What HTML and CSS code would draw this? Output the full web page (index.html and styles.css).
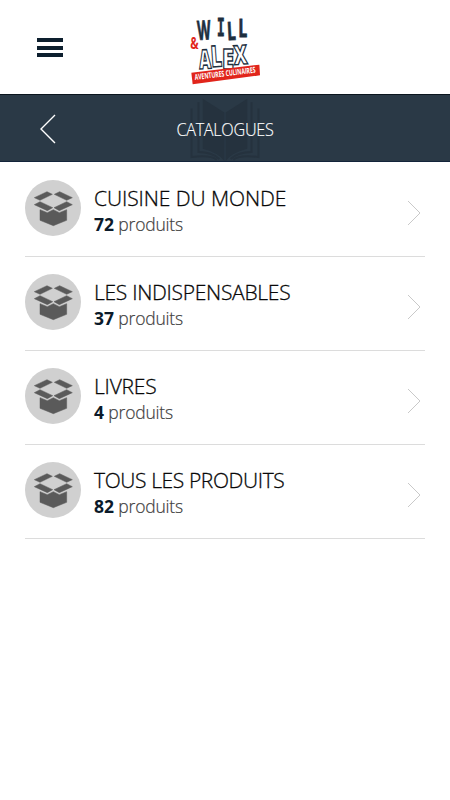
FILE: index.html
```
<!DOCTYPE html>
<html lang="fr">
<head>
<meta charset="utf-8">
<title>Catalogues</title>
<link rel="stylesheet" href="styles.css">
</head>
<body>
<svg class="defs" width="0" height="0">
<symbol id="box" viewBox="0 0 168 168">
<circle cx="84" cy="84" r="84" fill="#d0d0d0"/>
<path fill="#5a5a5a" stroke="#5a5a5a" stroke-width="1.5" d="M28 53L66 35L82 43L45 61ZM142 53L104 35L88 43L125 61ZM28 74L45 65L83 83L67 92ZM142 74L125 65L87 83L103 92ZM45 89L67 98L85 89L103 98L125 89V121L85 137L45 121Z"/>
</symbol>
<symbol id="next" viewBox="0 0 14 26"><path d="M1 1L13 13L1 25" fill="none" stroke="#c9c9c9" stroke-width="1"/></symbol>
</svg>
<header class="top">
<div class="burger"><i></i><i></i><i></i></div>
<svg class="logo" viewBox="0 0 270 255">
<g class="will">
<text x="52" y="104" textLength="40" lengthAdjust="spacingAndGlyphs" font-size="80" transform="rotate(-3 72 75)">W</text>
<text class="slab" x="111" y="94" textLength="23" lengthAdjust="spacingAndGlyphs" font-size="84">I</text>
<text x="141" y="105" textLength="26" lengthAdjust="spacingAndGlyphs" font-size="76" transform="rotate(-3 154 78)">L</text>
<text x="175" y="96" textLength="27" lengthAdjust="spacingAndGlyphs" font-size="74">L</text>
</g>
<text class="amp" x="31" y="132" textLength="25" lengthAdjust="spacingAndGlyphs" font-size="50">&amp;</text>
<g class="alex">
<text x="57" y="191" textLength="36" lengthAdjust="spacingAndGlyphs" font-size="80" transform="rotate(-3 75 163)">A</text>
<text x="92" y="185" textLength="33" lengthAdjust="spacingAndGlyphs" font-size="88" transform="rotate(-4 108 152)">L</text>
<text x="126" y="193" textLength="36" lengthAdjust="spacingAndGlyphs" font-size="82">E</text>
<text x="161" y="178" textLength="41" lengthAdjust="spacingAndGlyphs" font-size="80" transform="rotate(-4 180 150)">X</text>
</g>
<path d="M34 203L238 179L240 211L38 238Z" fill="#e1251b"/>
<text class="tag" x="45" y="225" textLength="184" lengthAdjust="spacingAndGlyphs" font-size="24" transform="rotate(-7 45 225)">AVENTURES CULINAIRES</text>
</svg>
</header>
<nav class="bar">
<svg class="back" viewBox="0 0 16 30"><path d="M15 1L1 15L15 29" fill="none" stroke="#fff" stroke-width="1.4"/></svg>
<svg class="book" viewBox="0 0 210 190">
<path fill="#25323e" d="M38 2L103 44V190Q85 165 38 153ZM172 2L107 44V190Q125 165 172 153Z"/>
<path fill="none" stroke="#25323e" stroke-width="6" d="M25 13V163Q65 163 88 184M4 32V178Q60 170 80 186M185 13V163Q145 163 122 184M206 32V178Q150 170 130 186"/>
</svg>
<h1>CATALOGUES</h1>
</nav>
<main class="list">
<a class="row"><svg class="ico"><use href="#box"/></svg><div class="txt"><h2 class="t1">CUISINE DU MONDE</h2><p><b>72</b> produits</p></div><svg class="next"><use href="#next"/></svg></a>
<a class="row"><svg class="ico"><use href="#box"/></svg><div class="txt"><h2 class="t2">LES INDISPENSABLES</h2><p><b>37</b> produits</p></div><svg class="next"><use href="#next"/></svg></a>
<a class="row"><svg class="ico"><use href="#box"/></svg><div class="txt"><h2 class="t3">LIVRES</h2><p><b>4</b> produits</p></div><svg class="next"><use href="#next"/></svg></a>
<a class="row"><svg class="ico"><use href="#box"/></svg><div class="txt"><h2 class="t4">TOUS LES PRODUITS</h2><p><b>82</b> produits</p></div><svg class="next"><use href="#next"/></svg></a>
</main>
</body>
</html>
```
FILE: styles.css
```
* { box-sizing: border-box; margin: 0; padding: 0; }
body { background: #fff; font-family: "Open Sans", "Noto Sans", sans-serif; height: 800px; overflow: hidden; }
.defs { position: absolute; }
svg { display: block; }
.top { height: 94px; display: grid; grid-template-columns: 180px 90px; padding-top: 5px; }
.burger { padding: 33px 0 0 37px; display: flex; flex-direction: column; gap: 3.5px; }
.burger i { width: 26px; height: 4px; background: #0d1f2e; flex: none; }
.logo { width: 90px; height: 85px; overflow: visible; }
.will text { font-family: "Open Sans", sans-serif; font-weight: 700; fill: #1d2f3f; stroke: #1d2f3f; stroke-width: 2.5; }
.will .slab { font-family: "Liberation Mono", monospace; }
.amp { font-family: "Open Sans", sans-serif; font-weight: 700; fill: #e1251b; }
.alex text { font-family: "Open Sans", sans-serif; font-weight: 800; fill: #fff; stroke: #1d2f3f; stroke-width: 4.5; }
.tag { font-family: "Open Sans", sans-serif; font-weight: 700; fill: #fff; }
.bar { height: 68px; background: #2a3946; border-top: 1px solid #0b151e; border-bottom: 1px solid #13243a; display: grid; grid-template-columns: 450px; align-items: center; }
.bar > * { grid-area: 1 / 1; }
.back { width: 16px; height: 30px; margin-left: 40px; margin-top: 1px; }
.book { width: 70px; height: 63px; justify-self: center; margin-top: 2px; }
.bar h1 { justify-self: center; z-index: 1; font-size: 18px; font-weight: 300; color: #fff; letter-spacing: -0.3px; line-height: 24px; margin-top: 1px; transform: scaleX(.9); -webkit-text-stroke: .15px #fff; }
.list { padding: 0 25px; }
.row { height: 94px; border-bottom: 1px solid #dcdcdc; display: grid; grid-template-columns: 56px 1fr 14px; column-gap: 13px; padding-top: 17px; align-items: start; }
.row:first-child { height: 95px; padding-top: 18px; }
.ico { width: 56px; height: 56px; }
.row h2 { font-size: 21px; font-weight: 300; line-height: 28px; color: #080808; white-space: nowrap; margin-top: 4px; -webkit-text-stroke: .3px #080808; }
.t1 { letter-spacing: -.08px; }
.t2 { letter-spacing: -.28px; }
.t3 { letter-spacing: -.2px; }
.t4 { letter-spacing: -.38px; }
.row p { font-size: 17.5px; line-height: 24px; color: #3c3c3c; letter-spacing: -.2px; font-weight: 300; -webkit-text-stroke: .2px #3c3c3c; }
.row b { color: #0b1a2a; font-weight: 700; letter-spacing: 0; -webkit-text-stroke: 0; }
.next { width: 14px; height: 26px; margin-top: 20px; margin-left: -4px; }
```
